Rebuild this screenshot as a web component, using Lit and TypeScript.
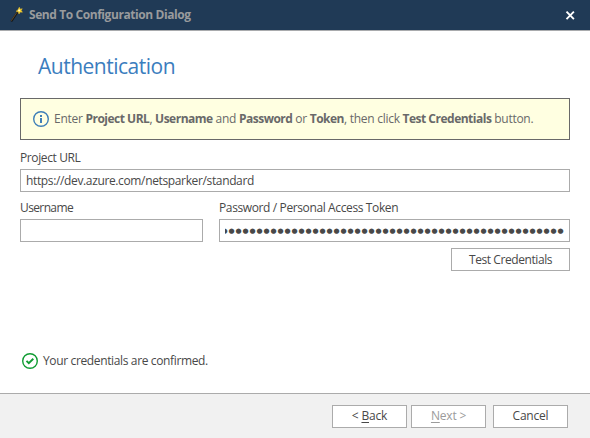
import { LitElement, html, css } from "lit";
import { customElement } from "lit/decorators.js";

@customElement("app-root")
export class AppRoot extends LitElement {
  static styles = css`
    :host { display: flex; flex-direction: column; width: 590px; height: 438px; overflow: hidden; background: #fff; color: #484848; font: 12px/16px "Open Sans", "Noto Sans", sans-serif; box-sizing: border-box; }
    * { box-sizing: border-box; }
    span, b, label { white-space: nowrap; }
    .title { display: flex; align-items: center; height: 31px; flex: none; background: #203a56; border-bottom: 1px solid #a9abad; color: #999b9d; padding: 0 14px 0 10px; }
    .title svg { flex: none; display: block; }
    .title .name { font-weight: 700; letter-spacing: -0.42px; margin-left: 5px; flex: 1; }
    .body { height: 362px; padding: 20px 20px 0; display: flex; flex-direction: column; }
    .heading { margin: 0 0 0 18px; font-size: 21px; line-height: 30px; font-weight: 400; color: #3b7dbe; letter-spacing: -0.5px; height: 47px; white-space: nowrap; }
    .notice { display: flex; align-items: center; height: 42px; flex: none; border: 1px solid #696969; background: #ffffe1; color: #696969; padding: 0 0 0 12px; letter-spacing: -0.27px; }
    .notice b { letter-spacing: -0.5px; }
    .notice svg, .status svg { display: block; flex: none; }
    .notice span { margin-left: 5px; }
    .label { display: block; height: 18px; line-height: 14px; letter-spacing: -0.38px; }
    .label.name { letter-spacing: -0.62px; }
    .field { height: 23px; border: 1px solid #ababab; background: #fff; padding: 0 5px; display: flex; align-items: center; overflow: hidden; }
    .value { letter-spacing: -0.36px; }
    .url { margin-top: 11px; }
    .row { display: grid; grid-template-columns: 183px 351px; gap: 16px; margin-top: 9px; }
    .clip { display: flex; justify-content: flex-end; overflow: hidden; width: 339px; height: 20px; }
    .dots { display: grid; grid-auto-flow: column; grid-auto-columns: 7px; justify-items: center; font: 7px/20px "DejaVu Sans", sans-serif; }
    .btn { display: flex; justify-content: center; align-items: center; height: 23px; width: 75px; border: 1px solid #ababab; background: #fff; color: #484848; font: inherit; line-height: 16px; padding: 0 0 1px; white-space: pre; border-radius: 0; letter-spacing: -0.2px; }
    .btn u { text-underline-offset: 2px; text-decoration-thickness: 1px; }
    .test { width: 119px; height: 23px; align-self: flex-end; margin-top: 6px; flex: none; padding: 0; letter-spacing: -0.42px; }
    .status { display: flex; align-items: center; gap: 5px; margin: 81px 0 0 2px; height: 18px; letter-spacing: -0.36px; }
    .footer { flex: 1; background: #f1f1f1; border-top: 1px solid #ababab; display: flex; padding: 11px 22px 0 332px; }
    .next { margin-left: 4px; color: #9b9b9b; }
    .cancel { margin-left: 7px; }
  `;

  render() {
    return html`
      <header class="title">
        <svg width="14" height="18" viewBox="0 0 14 18">
          <path d="M1.3 15.5L7.5 6.2" stroke="#17191a" stroke-width="2" />
          <path d="M1.2 14.8L7 6.2" stroke="#70532d" stroke-width=".8" />
          <path d="M9.3 1.2l.9 2 2-.5-1 1.8 1.2 1.7-2.2-.2-1.2 2-.7-2.2-2.2-.6 1.8-1.2z" fill="#f6cf28" stroke="#f0c52b" stroke-width=".5" />
          <circle cx="9.1" cy="4.4" r="1" fill="#fffbd0" />
        </svg>
        <span class="name">Send To Configuration Dialog</span>
        <svg width="11" height="11" viewBox="0 0 11 11"><path d="M1.5 1.7l7.4 7.4M8.9 1.7L1.5 9.1" stroke="#fff" stroke-width="1.9" /></svg>
      </header>
      <main class="body">
        <h1 class="heading">Authentication</h1>
        <div class="notice">
          <svg width="16" height="16" viewBox="0 0 16 16"><circle cx="8" cy="8" r="7.3" fill="none" stroke="#3f7fb8" stroke-width="1.4" /><path d="M7 4h2v2H7zM7 7h2v5H7z" fill="#3f7fb8" /></svg>
          <span>Enter <b>Project URL</b>, <b>Username</b> and <b>Password</b> or <b>Token</b>, then click <b>Test Credentials</b> button.</span>
        </div>
        <div class="url">
          <label class="label">Project URL</label>
          <div class="field"><span class="value">https://dev.azure.com/netsparker/standard</span></div>
        </div>
        <div class="row">
          <div><label class="label name">Username</label><div class="field"></div></div>
          <div>
            <label class="label">Password / Personal Access Token</label>
            <div class="field"><div class="clip"><div class="dots">${Array.from({ length: 49 }, () => html`<span>●</span>`)}</div></div></div>
          </div>
        </div>
        <button class="btn test">Test Credentials</button>
        <div class="status">
          <svg width="16" height="16" viewBox="0 0 16 16"><circle cx="8" cy="8" r="7.3" fill="none" stroke="#109c33" stroke-width="1.4" /><path d="M4.5 7.9l2.3 2.3 4.5-4.4" fill="none" stroke="#109c33" stroke-width="1.9" /></svg>
          <span>Your credentials are confirmed.</span>
        </div>
      </main>
      <footer class="footer">
        <button class="btn">&lt; <u>B</u>ack</button>
        <button class="btn next"><u>N</u>ext &gt;</button>
        <button class="btn cancel">Cancel</button>
      </footer>
    `;
  }
}
